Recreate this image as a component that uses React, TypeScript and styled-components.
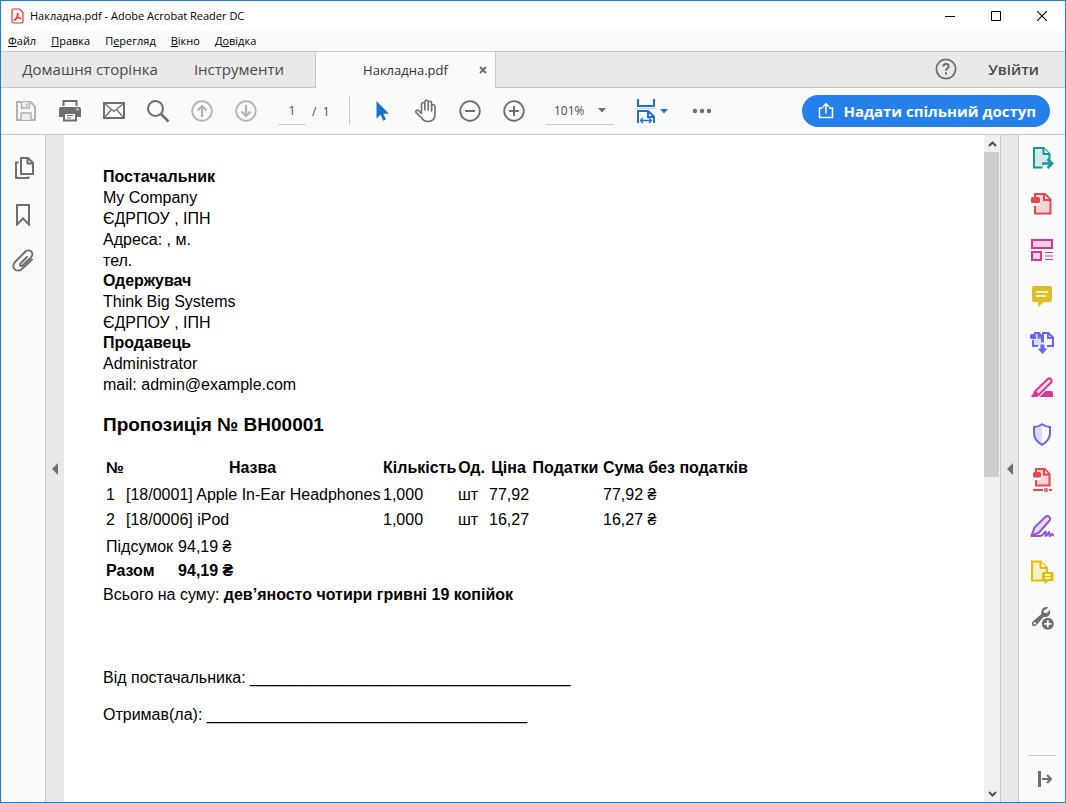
import React from "react";
import styled, { createGlobalStyle, css } from "styled-components";

const GlobalStyle = createGlobalStyle`
  *, *::before, *::after { box-sizing: border-box; }
  body { margin: 0; background: #fafafa; }
  button, input, select { font: inherit; color: inherit; }
`;

const uiFont = `"Open Sans", "Noto Sans", sans-serif`;
const docFont = `"Liberation Sans", Arial, sans-serif`;
const line = "#c8c8c8";
const grey = "#6e6e6e";
const blue = "#1b74cc";

const Frame = styled.div`
  display: flex;
  flex-direction: column;
  min-height: 100vh;
  border: 1px solid #1a80d5;
  background: #fafafa;
  font-family: ${uiFont};
  font-size: 12px;
  color: #000;
`;

const bareButton = css`
  display: flex;
  align-items: center;
  justify-content: center;
  padding: 0;
  border: 0;
  background: none;
  cursor: pointer;
`;

const TitleBar = styled.header`
  display: flex;
  align-items: center;
  height: 30px;
  padding-left: 9px;
  background: #fff;
`;

const WindowTitle = styled.h1`
  flex: 1;
  margin: 0 0 0 5px;
  font-size: 11px;
  font-weight: 400;
  line-height: 16px;
  white-space: nowrap;
`;

const WindowButton = styled.button`
  ${bareButton}
  width: 46px;
  height: 30px;
`;

const MenuBar = styled.nav`
  display: flex;
  gap: 1px;
  height: 21px;
  border-bottom: 1px solid ${line};
  font-size: 11px;
`;

const MenuItem = styled.button`
  ${bareButton}
  display: block;
  padding: 0 7px;
  line-height: 20px;
`;

const TabBar = styled.div`
  display: flex;
  height: 36px;
  background: #e9e9e9;
  color: #4b4b4b;
  font-size: 15px;
`;

const Tab = styled.button<{ $width: number; $end?: number }>`
  ${bareButton}
  width: ${(p) => p.$width}px;
  padding: 0 ${(p) => p.$end ?? 0}px 2px 0;
  border-bottom: 1px solid ${line};
  white-space: nowrap;
`;

const ActiveTab = styled.div`
  display: flex;
  align-items: center;
  width: 181px;
  border: solid ${line};
  border-width: 0 1px;
  background: #fafafa;
  color: #323232;
`;

const ActiveTabLabel = styled.button`
  ${bareButton}
  flex: 1;
  padding-left: 24px;
  font-size: 13px;
`;

const CloseTab = styled.button`
  ${bareButton}
  width: 24px;
  height: 24px;
`;

const TabBarEnd = styled.div`
  display: flex;
  flex: 1;
  align-items: center;
  justify-content: flex-end;
  gap: 30px;
  padding: 0 26px 2px 0;
  border-bottom: 1px solid ${line};
`;

const PlainButton = styled.button`
  ${bareButton}
  font-weight: 600;
`;

const ToolBar = styled.div`
  display: flex;
  align-items: center;
  height: 47px;
  padding: 0 15px 0 3px;
  border-bottom: 1px solid ${line};
  color: ${grey};
`;

const ToolButton = styled.button<{ $wide?: number; $faded?: boolean }>`
  ${bareButton}
  width: ${(p) => p.$wide ?? 44}px;
  height: 36px;
  color: ${(p) => (p.$faded ? "#b3b3b3" : grey)};
`;

const PageField = styled.label`
  display: flex;
  align-items: center;
  gap: 6px;
  margin-left: 10px;
  color: #4b4b4b;
`;

const PageInput = styled.input`
  width: 28px;
  height: 28px;
  padding: 0;
  border: 0;
  border-bottom: 1px solid ${line};
  background: none;
  text-align: center;
`;

const Divider = styled.span`
  width: 1px;
  height: 28px;
  margin: 0 10px 0 auto;
  background: ${line};
`;

const NavGroup = styled.div`
  display: flex;
  align-items: center;
  width: 356px;
`;

const ZoomField = styled.div`
  display: flex;
  align-items: center;
  width: 68px;
  height: 28px;
  margin: 0 16px 0 10px;
  border-bottom: 1px solid ${line};
  color: #4b4b4b;
`;

const ZoomSelect = styled.select`
  width: 52px;
  height: 24px;
  padding: 0 0 0 8px;
  border: 0;
  background: none;
  appearance: none;
`;

const ShareButton = styled.button`
  ${bareButton}
  gap: 8px;
  height: 32px;
  margin-left: auto;
  padding: 0 14px 1px;
  border-radius: 16px;
  background: #2680eb;
  color: #fff;
  font-size: 15px;
  font-weight: 700;
  white-space: nowrap;
`;

const Workspace = styled.div`
  display: flex;
  flex: 1;
`;

const SidePane = styled.aside`
  display: flex;
  flex-direction: column;
  width: 45px;
  padding-top: 10px;
  border-right: 1px solid ${line};
  color: ${grey};
`;

const PaneButton = styled.button`
  ${bareButton}
  width: 100%;
  height: 46px;
  color: ${grey};
`;

const Gutter = styled.button<{ $edged?: boolean }>`
  ${bareButton}
  width: ${(p) => (p.$edged ? 19 : 18)}px;
  background: #e9e9e9;
  border: solid ${line};
  border-width: ${(p) => (p.$edged ? "0 1px" : "0")};
`;

const Page = styled.main`
  flex: 1;
  min-width: 0;
  padding: 32px 39px;
  background: #fff;
  font-family: ${docFont};
  font-size: 16px;
  line-height: 21px;
`;

const Party = styled.section`
  margin: 0;
`;

const Role = styled.h3`
  margin: 0;
  font-size: 16px;
  line-height: 20px;
`;

const Line = styled.p`
  margin: 0;
`;

const DocTitle = styled.h2`
  margin: 17px 0 16px;
  font-size: 19px;
  line-height: 26px;
`;

const Items = styled.table`
  margin-left: 3px;
  border-collapse: collapse;
  table-layout: fixed;
  width: 642px;
  white-space: nowrap;

  th, td { padding: 0; line-height: 25px; }
  th { padding-right: 4px; line-height: 28px; }
  td { text-align: left; }
`;

const Col = styled.col<{ $width: number }>`
  width: ${(p) => p.$width}px;
`;

const Totals = styled.table`
  margin: 3px 0 0 3px;
  border-collapse: collapse;
  white-space: nowrap;

  th, td { padding: 0 5px 0 0; text-align: left; line-height: 24px; }
`;

const TotalRow = styled.tr<{ $strong?: boolean }>`
  th, td { font-weight: ${(p) => (p.$strong ? 700 : 400)}; }
`;

const InWords = styled.p`
  margin: 0 0 60px;
  line-height: 24px;
`;

const Signature = styled.p`
  margin: 0 0 16px;
  white-space: nowrap;
`;

const ScrollBar = styled.div`
  display: flex;
  flex-direction: column;
  width: 16px;
  background: #f0f0f0;
`;

const ScrollArrow = styled.button`
  ${bareButton}
  height: 17px;
`;

const ScrollTrack = styled.div`
  display: grid;
  flex: 1;
  grid-template-rows: 20fr 19fr;
`;

const ScrollThumb = styled.span`
  width: 15px;
  background: #cdcdcd;
`;

const ToolPane = styled.aside`
  display: flex;
  flex-direction: column;
  width: 46px;
`;

const PaneFooter = styled.div`
  margin: auto 9px 0;
  border-top: 1px solid ${line};
`;

type IconProps = {
  w?: number;
  h?: number;
  stroke?: string;
  fill?: string;
  sw?: number;
  children: React.ReactNode;
};

const Icon = ({ w = 24, h = 24, stroke = "currentColor", fill = "none", sw = 2, children }: IconProps) => (
  <svg width={w} height={h} viewBox={`0 0 ${w} ${h}`} fill={fill} stroke={stroke} strokeWidth={sw} aria-hidden="true">
    {children}
  </svg>
);

const Caret = ({ color = grey }: { color?: string }) => (
  <Icon w={8} h={5} fill={color} stroke="none">
    <path d="M0 0h8L4 4.5z" />
  </Icon>
);

const SideArrow = () => (
  <Icon w={8} h={12} fill={grey} stroke="none">
    <path d="M7 0v12L1 6z" />
  </Icon>
);

const AcrobatIcon = () => (
  <Icon w={15} h={16} stroke="#e8352e" sw={1.2}>
    <path d="M3.500 1h6l3.500 3.500v9a1.500 1.500 0 0 1-1.500 1.500h-8A1.500 1.500 0 0 1 2 13.500v-11A1.500 1.500 0 0 1 3.500 1z" fill="#fff8f7" />
    <path d="M4.300 11.800c1.500-.8 3-3.300 3-5.800 0-.9.900-.8.800.1-.3 2.200-1.700 5.100-3 6-.6.4-1.200-.1-.8-.3zM5.600 10.300c1.800-.8 3.500-.9 4.900-.4.7.3.4 1-.3.800C8.900 10.200 7.800 8.900 7.400 7.300" strokeWidth="1.100" />
  </Icon>
);

const SaveIcon = () => (
  <Icon>
    <path d="M3 3h13.500L21 7.500V21H3z" />
    <path d="M7.500 3v6h8V3M7 21v-7h10v7" strokeWidth="1.500" fill="#ececec" />
    <path d="M13 4.500v3" strokeWidth="1.500" />
  </Icon>
);

const PrintIcon = () => (
  <Icon>
    <path d="M5.500 7V2h13v5" />
    <path d="M3 8h18a2 2 0 0 1 2 2v8h-4.500v-4h-13v4H1v-8a2 2 0 0 1 2-2z" fill="currentColor" stroke="none" />
    <path d="M6 14h12v7.500H6z" fill="#fafafa" />
    <path d="M9 16.500h6M9 19h4" strokeWidth="1.200" />
    <path d="M18.500 10.500h2" stroke="#fafafa" strokeWidth="1.500" />
  </Icon>
);

const MailIcon = () => (
  <Icon>
    <path d="M2 4h20v15H2z" />
    <path d="M2.500 4.500 12 12.500l9.500-8M2.500 18.500l7-8M21.500 18.500l-7-8" strokeWidth="1.300" />
  </Icon>
);

const SearchIcon = () => (
  <Icon>
    <circle cx="9.500" cy="9.500" r="7.500" />
    <path d="m15 15 7.500 7.500" strokeWidth="2.600" />
  </Icon>
);

const CircleArrow = ({ down }: { down?: boolean }) => (
  <Icon>
    <circle cx="12" cy="12" r="9.800" strokeWidth="1.800" />
    <path d={down ? "M12 6v11M7.500 12.500 12 17l4.500-4.500" : "M12 18V7M7.500 11.500 12 7l4.500 4.500"} strokeWidth="2.200" />
  </Icon>
);

const CircleSign = ({ plus }: { plus?: boolean }) => (
  <Icon>
    <circle cx="12" cy="12" r="9.800" strokeWidth="1.800" />
    <path d={plus ? "M7 12h10M12 7v10" : "M7 12h10"} />
  </Icon>
);

const PointerIcon = () => (
  <Icon fill={blue} stroke="none">
    <path d="M6.500 2v17.500l4-3.700 2.700 6 2.800-1.300-2.700-5.800h5.500z" />
  </Icon>
);

const HandIcon = () => (
  <Icon sw={1.6}>
    <g strokeLinecap="round" strokeLinejoin="round">
      <path d="M7.500 14.500V5.200a1.650 1.650 0 0 1 3.300 0V11V3a1.700 1.700 0 0 1 3.400 0v8V4a1.700 1.700 0 0 1 3.400 0v8V7.500a1.700 1.700 0 0 1 3.400 0V15c0 5-2.500 7.500-7 7.500-4 0-5.500-1.800-7-4.300L2 13.600c-1-1.800 1.300-3.200 2.700-1.800z" />
    </g>
  </Icon>
);

const FitIcon = () => (
  <Icon w={20} h={26} stroke={blue}>
    <path d="M2 1v7h16V1" />
    <path d="M0 10.500h20" stroke="#bcd6f0" strokeWidth="1" />
    <path d="M2 25V13h10l6 5.500V25M12 13v6h6" />
    <path d="M4.500 22.500h11M7 20l-2.500 2.500L7 25M13 20l2.500 2.500L13 25" strokeWidth="1.300" />
  </Icon>
);

const MoreIcon = () => (
  <Icon w={20} h={6} fill={grey} stroke="none">
    <circle cx="3" cy="3" r="2.200" />
    <circle cx="10" cy="3" r="2.200" />
    <circle cx="17" cy="3" r="2.200" />
  </Icon>
);

const HelpIcon = () => (
  <Icon stroke={grey}>
    <circle cx="12" cy="12" r="9.600" strokeWidth="1.800" />
    <path d="M9.300 9.400C9.300 6.300 14.700 6.400 14.700 9.400 14.700 11.300 12 11.400 12 13.800" />
    <path d="M12 15.300v2.200" />
  </Icon>
);

const ShareIcon = () => (
  <Icon w={19} h={18} sw={1.5}>
    <path d="M7 6H3.500v9.500h13V6H13M10 11.500V2M7 4.800 10 1.800l3 3" />
  </Icon>
);

const PagesIcon = () => (
  <Icon>
    <path d="M10 2h7l5 5v11H10zM16.500 2.500V7.500H21.500" strokeLinejoin="round" />
    <path d="M7.500 6.500H5V22h12.500v-1.500" strokeLinejoin="round" />
  </Icon>
);

const BookmarkIcon = () => (
  <Icon>
    <path d="M6 3h12v19.500l-6-6-6 6z" />
  </Icon>
);

const ClipIcon = () => (
  <Icon sw={1.9}>
    <path
      strokeLinecap="round"
      d="m16 8-6.500 6.500c-1.600 1.600.5 3.500 2 2L19.500 9c5-5.300-1.300-10.300-5.500-6L4.500 12.500c-6 6.300 1.500 12.300 7 7L21 10.500"
      transform="translate(0 1)"
    />
  </Icon>
);

const ExportIcon = () => (
  <Icon stroke="#1a9696">
    <path d="M12.500 21.500H4V2h9.500l6 6v5.500" fill="#d3ecea" />
    <path d="M13.500 2v6h6" fill="#fafafa" />
    <path d="M12 17.500h9M17.500 13l4.500 4.500L17.500 22" strokeWidth="2.600" />
  </Icon>
);

const CreateIcon = () => (
  <Icon stroke="#e34850">
    <path d="M5 2h10l5.500 5.500V21.500H5z" fill="#f7d5d7" />
    <path d="M14 2.500V8h6" fill="#fafafa" />
    <path d="M3 10.500h7v3.500H3z" fill="#fafafa" stroke="none" />
    <rect x="1" y="5" width="9" height="6" rx="1.500" fill="#e34850" stroke="none" />
  </Icon>
);

const OrganizeIcon = () => (
  <Icon stroke="#d83790">
    <path d="M2 2h20v8H2zM2 14h9v8H2z" fill="#f4d0e6" />
    <path d="M15 14.500h8M15 18h8M15 21.500h8" strokeWidth="1.200" />
  </Icon>
);

const CommentIcon = () => (
  <Icon fill="#dfbf27" stroke="none">
    <path d="M4 2h16a2 2 0 0 1 2 2v12a2 2 0 0 1-2 2h-6l-6 5v-5H4a2 2 0 0 1-2-2V4a2 2 0 0 1 2-2z" />
    <path d="M6 8h12M6 12h10" stroke="#fff" strokeWidth="1.600" />
  </Icon>
);

const CombineIcon = () => (
  <Icon stroke="#6767ec">
    <path d="M3 3h6l3.500 3.500V16H3z" fill="#dcdcfa" stroke="none" />
    <path d="M3 10v6h5M4 3h5l3 3.500V12.500M8.500 3v4.500H12M13 12.500V3h5.500L23 7.500V16h-6M18 3v5h5" />
    <rect x="0" y="4" width="6" height="5" rx="1.500" fill="#6767ec" stroke="none" />
    <path d="M10.500 14.500h4v4H17.500L12.500 24l-5-5.500h3z" fill="#6767ec" stroke="none" />
  </Icon>
);

const HighlightIcon = () => (
  <Icon stroke="#d83790">
    <path d="M15.500 15H21a2 2 0 0 1 2 2v4H9.500z" fill="#d83790" stroke="none" />
    <path d="M17.500 3.200 5 15.500l3.500 3.500L21 6.500c2-2.300-1.200-5.500-3.500-3.300z" fill="#f9e0ef" />
    <path d="M4.500 15 1 21h6L9.500 18.500z" fill="#d83790" stroke="none" />
  </Icon>
);

const ShieldIcon = () => (
  <Icon stroke="#6767ec">
    <path d="M12 2.200V22.800C7 20 4 17 4 11V5c3.500 0 5.500-1 8-2.800z" fill="#dcdcfa" stroke="none" />
    <path d="M12 2.200C14.500 4 16.500 5 20 5v6c0 6-3 9-8 11.800C7 20 4 17 4 11V5c3.500 0 5.500-1 8-2.800z" />
  </Icon>
);

const CompressIcon = () => (
  <Icon stroke="#e34850">
    <path d="M6 1h8.500L19.500 6v11.500H6z" fill="#f7d5d7" />
    <path d="M14 1.500V6.500h5" fill="#fafafa" />
    <path d="M4 8.500h7V12H4z" fill="#fafafa" stroke="none" />
    <rect x="3" y="4" width="8" height="5.500" rx="1.500" fill="#e34850" stroke="none" />
    <path d="M3 22h10M19 22h3" />
    <circle cx="16" cy="22" r="1.400" strokeWidth="1.300" />
  </Icon>
);

const SignIcon = () => (
  <Icon stroke="#9256d9">
    <path d="M4.500 13.500 15.500 2.800c2.400-2.200 6.300 1.200 4 3.700L9 18.500 1.500 21.800z" fill="#e6dcf7" strokeLinejoin="round" />
    <path d="M1 22h9.500c3 0 4-4.500 5-4.500s-1 4.500.5 4.500 2-4 3-4-.5 4 1 4 1-2 2-2 .5 1.500 2 1.500" strokeWidth="1.900" />
  </Icon>
);

const SendCommentIcon = () => (
  <Icon stroke="#dfbf00">
    <path d="M2 1.500h8.500L17 8v12.500H2z" fill="#f7f0cb" />
    <path d="M10.500 1.500V8H17" fill="#fafafa" />
    <path d="M13.500 12h8.500A1.500 1.500 0 0 1 23.500 13.500v6a1.500 1.500 0 0 1-1.500 1.500H18.500l-4 3v-3h-1A1.500 1.500 0 0 1 12 19.500v-6a1.500 1.500 0 0 1 1.500-1.500z" fill="#dfbf00" stroke="none" />
    <path d="M15 15h5.500M15 18h5.500" stroke="#fff" strokeWidth="1.300" />
  </Icon>
);

const MoreToolsIcon = () => (
  <Icon stroke="none" fill={grey}>
    <path d="M18.800 1.600c-3-1.400-6.600.1-7.400 3.300-.3 1.200-.2 2.200.1 3L2.800 15.500c-2.900 3 .6 6.300 3.500 3.800L13.500 11c1 .4 2 .4 3 .1 3-.9 4.500-4.200 3.200-7L16.500 7.300 14 6.700l-.5-2z" />
    <circle cx="4.800" cy="17.300" r="1.200" fill="#fafafa" />
    <circle cx="17.800" cy="17.800" r="7" fill="#fafafa" />
    <circle cx="17.800" cy="17.800" r="6" />
    <path d="M14.300 17.800h7M17.800 14.300v7" stroke="#fff" strokeWidth="1.800" />
  </Icon>
);

const tools: [string, () => React.JSX.Element][] = [
  ["Експорт PDF", ExportIcon],
  ["Створити PDF", CreateIcon],
  ["Упорядкувати сторінки", OrganizeIcon],
  ["Коментар", CommentIcon],
  ["Об’єднати файли", CombineIcon],
  ["Редагування", HighlightIcon],
  ["Захистити", ShieldIcon],
  ["Стиснути PDF", CompressIcon],
  ["Заповнити й підписати", SignIcon],
  ["Надіслати для коментування", SendCommentIcon],
  ["Інші інструменти", MoreToolsIcon],
];

const parties = [
  { role: "Постачальник", lines: ["My Company", "ЄДРПОУ , ІПН", "Адреса: , м.", "тел."] },
  { role: "Одержувач", lines: ["Think Big Systems", "ЄДРПОУ , ІПН"] },
  { role: "Продавець", lines: ["Administrator", "mail: admin@example.com"] },
];

const headings = ["№", "Назва", "Кількість", "Од.", "Ціна", "Податки", "Сума без податків"];
const columnWidths = [20, 257, 75, 31, 43, 71, 145];
const rows = [
  ["1", "[18/0001] Apple In-Ear Headphones", "1,000", "шт", "77,92", "", "77,92 ₴"],
  ["2", "[18/0006] iPod", "1,000", "шт", "16,27", "", "16,27 ₴"],
];
const blank = "_".repeat(36);

export default function App() {
  return (
    <Frame>
      <GlobalStyle />
      <TitleBar>
        <AcrobatIcon />
        <WindowTitle>Накладна.pdf - Adobe Acrobat Reader DC</WindowTitle>
        <WindowButton aria-label="Згорнути">
          <Icon w={10} h={11} stroke="#000" sw={1}><path d="M0 5.500h10" /></Icon>
        </WindowButton>
        <WindowButton aria-label="Розгорнути">
          <Icon w={10} h={10} stroke="#000" sw={1}><path d="M.5 .5h9v9h-9z" /></Icon>
        </WindowButton>
        <WindowButton aria-label="Закрити">
          <Icon w={10} h={10} stroke="#000" sw={1.1}><path d="m0 0 10 10M10 0 0 10" /></Icon>
        </WindowButton>
      </TitleBar>

      <MenuBar>
        <MenuItem><u>Ф</u>айл</MenuItem>
        <MenuItem><u>П</u>равка</MenuItem>
        <MenuItem>П<u>е</u>регляд</MenuItem>
        <MenuItem><u>В</u>ікно</MenuItem>
        <MenuItem>Д<u>о</u>відка</MenuItem>
      </MenuBar>

      <TabBar>
        <Tab $width={178}>Домашня сторінка</Tab>
        <Tab $width={136} $end={16}>Інструменти</Tab>
        <ActiveTab>
          <ActiveTabLabel>Накладна.pdf</ActiveTabLabel>
          <CloseTab aria-label="Закрити вкладку">
            <Icon w={8} h={8} stroke={grey}><path d="m1 1 6 6M7 1 1 7" /></Icon>
          </CloseTab>
        </ActiveTab>
        <TabBarEnd>
          <PlainButton aria-label="Довідка"><HelpIcon /></PlainButton>
          <PlainButton>Увійти</PlainButton>
        </TabBarEnd>
      </TabBar>

      <ToolBar>
        <NavGroup>
          <ToolButton $faded aria-label="Зберегти"><SaveIcon /></ToolButton>
          <ToolButton aria-label="Друк"><PrintIcon /></ToolButton>
          <ToolButton aria-label="Електронна пошта"><MailIcon /></ToolButton>
          <ToolButton aria-label="Пошук"><SearchIcon /></ToolButton>
          <ToolButton $faded aria-label="Попередня сторінка"><CircleArrow /></ToolButton>
          <ToolButton $faded aria-label="Наступна сторінка"><CircleArrow down /></ToolButton>
          <PageField>
            <PageInput aria-label="Номер сторінки" defaultValue="1" />
            <span>/&nbsp; 1</span>
          </PageField>
          <Divider />
        </NavGroup>
        <ToolButton aria-label="Виділення"><PointerIcon /></ToolButton>
        <ToolButton aria-label="Рука"><HandIcon /></ToolButton>
        <ToolButton aria-label="Зменшити"><CircleSign /></ToolButton>
        <ToolButton aria-label="Збільшити"><CircleSign plus /></ToolButton>
        <ZoomField>
          <ZoomSelect aria-label="Масштаб" defaultValue="101%">
            <option>101%</option>
          </ZoomSelect>
          <Caret />
        </ZoomField>
        <ToolButton aria-label="За шириною">
          <FitIcon />&nbsp;<Caret color={blue} />
        </ToolButton>
        <ToolButton $wide={56} aria-label="Додаткові засоби"><MoreIcon /></ToolButton>
        <ShareButton><ShareIcon />Надати спільний доступ</ShareButton>
      </ToolBar>

      <Workspace>
        <SidePane>
          <PaneButton aria-label="Мініатюри сторінок"><PagesIcon /></PaneButton>
          <PaneButton aria-label="Закладки"><BookmarkIcon /></PaneButton>
          <PaneButton aria-label="Вкладення"><ClipIcon /></PaneButton>
        </SidePane>
        <Gutter aria-label="Панель навігації"><SideArrow /></Gutter>

        <Page>
          {parties.map((p) => (
            <Party key={p.role}>
              <Role>{p.role}</Role>
              {p.lines.map((l) => <Line key={l}>{l}</Line>)}
            </Party>
          ))}
          <DocTitle>Пропозиція № ВН00001</DocTitle>
          <Items>
            <colgroup>
              {columnWidths.map((w, i) => <Col key={i} $width={w} />)}
            </colgroup>
            <thead>
              <tr>{headings.map((h) => <th key={h} scope="col">{h}</th>)}</tr>
            </thead>
            <tbody>
              {rows.map((r) => (
                <tr key={r[0]}>{r.map((c, i) => <td key={i}>{c}</td>)}</tr>
              ))}
            </tbody>
          </Items>
          <Totals>
            <tbody>
              <TotalRow><th scope="row">Підсумок</th><td>94,19 ₴</td></TotalRow>
              <TotalRow $strong><th scope="row">Разом</th><td>94,19 ₴</td></TotalRow>
            </tbody>
          </Totals>
          <InWords>Всього на суму: <b>дев’яносто чотири гривні 19 копійок</b></InWords>
          <Signature>Від постачальника: {blank}</Signature>
          <Signature>Отримав(ла): {blank}</Signature>
        </Page>

        <ScrollBar>
          <ScrollArrow aria-label="Прокрутити вгору">
            <Icon w={9} h={6} stroke="#505050"><path d="m1 5 3.500-3.500L8 5" /></Icon>
          </ScrollArrow>
          <ScrollTrack><ScrollThumb /></ScrollTrack>
          <ScrollArrow aria-label="Прокрутити вниз">
            <Icon w={9} h={6} stroke="#505050"><path d="m1 1 3.500 3.500L8 1" /></Icon>
          </ScrollArrow>
        </ScrollBar>
        <Gutter $edged aria-label="Панель інструментів"><SideArrow /></Gutter>

        <ToolPane>
          {tools.map(([name, ToolIcon]) => (
            <PaneButton key={name} aria-label={name}><ToolIcon /></PaneButton>
          ))}
          <PaneFooter>
            <PaneButton aria-label="Згорнути панель">
              <Icon w={20} h={16} stroke={grey}>
                <path d="M7.500 0v16" strokeWidth="3" />
                <path d="M10 8h9M15 4l4 4-4 4" strokeWidth="2.200" />
              </Icon>
            </PaneButton>
          </PaneFooter>
        </ToolPane>
      </Workspace>
    </Frame>
  );
}
